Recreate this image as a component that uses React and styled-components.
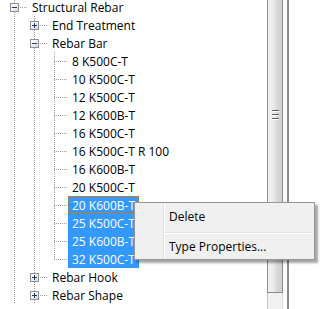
import React from "react";
import styled, { createGlobalStyle } from "styled-components";

const GlobalStyle = createGlobalStyle`
  html, body {
    margin: 0;
    padding: 0;
    background: #ffffff;
    overflow: hidden;
  }
  body {
    font-family: "Open Sans", "Liberation Sans", sans-serif;
    font-size: 12px;
    color: #000000;
  }
`;

const tree = [
  { guides: [], conn: "tee", box: "minus", label: "Structural Rebar" },
  { guides: ["pipe"], conn: "tee", box: "plus", label: "End Treatment" },
  { guides: ["pipe"], conn: "tee", box: "minus", label: "Rebar Bar" },
  { guides: ["pipe", "pipe"], conn: "tee", label: "8 K500C-T" },
  { guides: ["pipe", "pipe"], conn: "tee", label: "10 K500C-T" },
  { guides: ["pipe", "pipe"], conn: "tee", label: "12 K500C-T" },
  { guides: ["pipe", "pipe"], conn: "tee", label: "12 K600B-T" },
  { guides: ["pipe", "pipe"], conn: "tee", label: "16 K500C-T" },
  { guides: ["pipe", "pipe"], conn: "tee", label: "16 K500C-T R 100" },
  { guides: ["pipe", "pipe"], conn: "tee", label: "16 K600B-T" },
  { guides: ["pipe", "pipe"], conn: "tee", label: "20 K500C-T" },
  { guides: ["pipe", "pipe"], conn: "tee", label: "20 K600B-T", selected: true, focused: true },
  { guides: ["pipe", "pipe"], conn: "tee", label: "25 K500C-T", selected: true },
  { guides: ["pipe", "pipe"], conn: "tee", label: "25 K600B-T", selected: true },
  { guides: ["pipe", "pipe"], conn: "elbow", label: "32 K500C-T", selected: true },
  { guides: ["pipe"], conn: "tee", box: "plus", label: "Rebar Hook" },
  { guides: ["pipe"], conn: "tee", box: "plus", label: "Rebar Shape" },
];

const DOT_V = "repeating-linear-gradient(to bottom, #a0a0a0 0 1px, transparent 1px 2px)";
const DOT_H = "repeating-linear-gradient(to right, #a0a0a0 0 1px, transparent 1px 2px)";

function Guide({ type, children }) {
  return <GuideCell $type={type}>{children}</GuideCell>;
}

function ExpandBox({ kind }) {
  return (
    <Box>
      <svg width="7" height="7" viewBox="0 0 7 7">
        <rect x="1" y="3" width="5" height="1" fill="#1c3a6b" />
        {kind === "plus" && <rect x="3" y="1" width="1" height="5" fill="#1c3a6b" />}
      </svg>
    </Box>
  );
}

export default function App() {
  return (
    <>
      <GlobalStyle />
      <Page>
        <Tree>
          {tree.map((n, i) => (
            <Row key={i}>
              {n.guides.map((g, j) => (
                <Guide key={j} type={g} />
              ))}
              <Guide type={n.conn}>{n.box && <ExpandBox kind={n.box} />}</Guide>
              <Stub />
              <Label $selected={n.selected} $focused={n.focused}>
                {n.label}
              </Label>
            </Row>
          ))}
        </Tree>
        <ScrollBar>
          <Thumb>
            <Grip>
              <GripLine />
              <GripLine />
              <GripLine />
            </Grip>
          </Thumb>
          <Track />
        </ScrollBar>
        <Blank />
        <Menu>
          <MenuItem>Delete</MenuItem>
          <MenuSeparator />
          <MenuItem>Type Properties...</MenuItem>
        </Menu>
      </Page>
    </>
  );
}

const Page = styled.div`
  position: relative;
  display: flex;
  width: 320px;
  height: 309px;
  overflow: hidden;
  background: #ffffff;
`;

const Tree = styled.div`
  width: 263px;
  padding-left: 4px;
  margin-top: -2px;
  display: flex;
  flex-direction: column;
  overflow: hidden;
`;

const Row = styled.div`
  display: flex;
  align-items: center;
  height: 18px;
  flex: none;
  white-space: nowrap;
`;

const GuideCell = styled.div`
  width: 20px;
  height: 18px;
  flex: none;
  display: flex;
  align-items: center;
  background-repeat: no-repeat;
  background-image: ${(p) =>
    p.$type === "pipe" ? DOT_V : `${DOT_V}, ${DOT_H}`};
  background-size: ${(p) =>
    p.$type === "pipe"
      ? "1px 18px"
      : p.$type === "tee"
      ? "1px 18px, 10px 1px"
      : "1px 10px, 10px 1px"};
  background-position: ${(p) =>
    p.$type === "pipe" ? "10px 0" : "10px 0, 10px 9px"};
`;

const Stub = styled.div`
  width: 4px;
  height: 18px;
  flex: none;
  background-image: ${DOT_H};
  background-repeat: no-repeat;
  background-size: 4px 1px;
  background-position: 0 9px;
`;

const Box = styled.div`
  width: 9px;
  height: 9px;
  box-sizing: border-box;
  margin-left: 6px;
  margin-top: 1px;
  border: 1px solid #919191;
  background: linear-gradient(135deg, #ffffff 0%, #f2f2f2 45%, #d6d6d6 100%);
  display: flex;
  align-items: center;
  justify-content: center;
`;

const Label = styled.span`
  display: flex;
  align-items: center;
  height: 18px;
  box-sizing: border-box;
  padding: 0 4px 0 4px;
  background: ${(p) => (p.$selected ? "#3399ff" : "transparent")};
  color: ${(p) => (p.$selected ? "#ffffff" : "#000000")};
  outline: ${(p) => (p.$focused ? "1px dotted #c8732a" : "none")};
  outline-offset: -1px;
`;

const ScrollBar = styled.div`
  width: 22px;
  height: 309px;
  flex: none;
  display: flex;
  flex-direction: column;
  box-sizing: border-box;
  border-right: 2px solid #8c8c8c;
  background: #f7f7f7;
  background-image: linear-gradient(to right, transparent 15px, #fcfcfc 15px);
`;

const Thumb = styled.div`
  width: 16px;
  height: 293px;
  flex: none;
  box-sizing: border-box;
  border: 1px solid #8d8d8d;
  border-top: none;
  background: linear-gradient(
    to right,
    #f2f2f2 0%,
    #ebebeb 40%,
    #dadada 60%,
    #cfcfcf 100%
  );
  display: flex;
  flex-direction: column;
  align-items: center;
  padding-top: 110px;
`;

const Grip = styled.div`
  display: flex;
  flex-direction: column;
  gap: 2px;
`;

const GripLine = styled.div`
  width: 7px;
  height: 1px;
  background: #5f5f5f;
  border-bottom: 1px solid #ffffff;
`;

const Track = styled.div`
  width: 16px;
  flex: 1;
  box-sizing: border-box;
  border-left: 1px solid #c6c6c6;
  border-right: 1px solid #dcdcdc;
  background: #f1f1f1;
`;

const Blank = styled.div`
  flex: 1;
  background: #ffffff;
`;

const Menu = styled.div`
  position: absolute;
  left: 134px;
  top: 202px;
  width: 181px;
  box-sizing: border-box;
  padding: 2px;
  border: 1px solid #979797;
  background-color: #f0f0f0;
  background-image: linear-gradient(to right, #e2e3e3 0 1px, #ffffff 1px 2px);
  background-repeat: no-repeat;
  background-size: 2px 100%;
  background-position: 28px 0;
  box-shadow: 3px 3px 2px rgba(0, 0, 0, 0.35);
  font-family: "Open Sans", "Liberation Sans", sans-serif;
  font-size: 12px;
  color: #000000;
`;

const MenuItem = styled.div`
  height: 22px;
  display: flex;
  align-items: center;
  padding-left: 32px;
`;

const MenuSeparator = styled.div`
  height: 1px;
  margin: 5px 0 1px 28px;
  border-top: 1px solid #e2e3e3;
  background: #ffffff;
`;
